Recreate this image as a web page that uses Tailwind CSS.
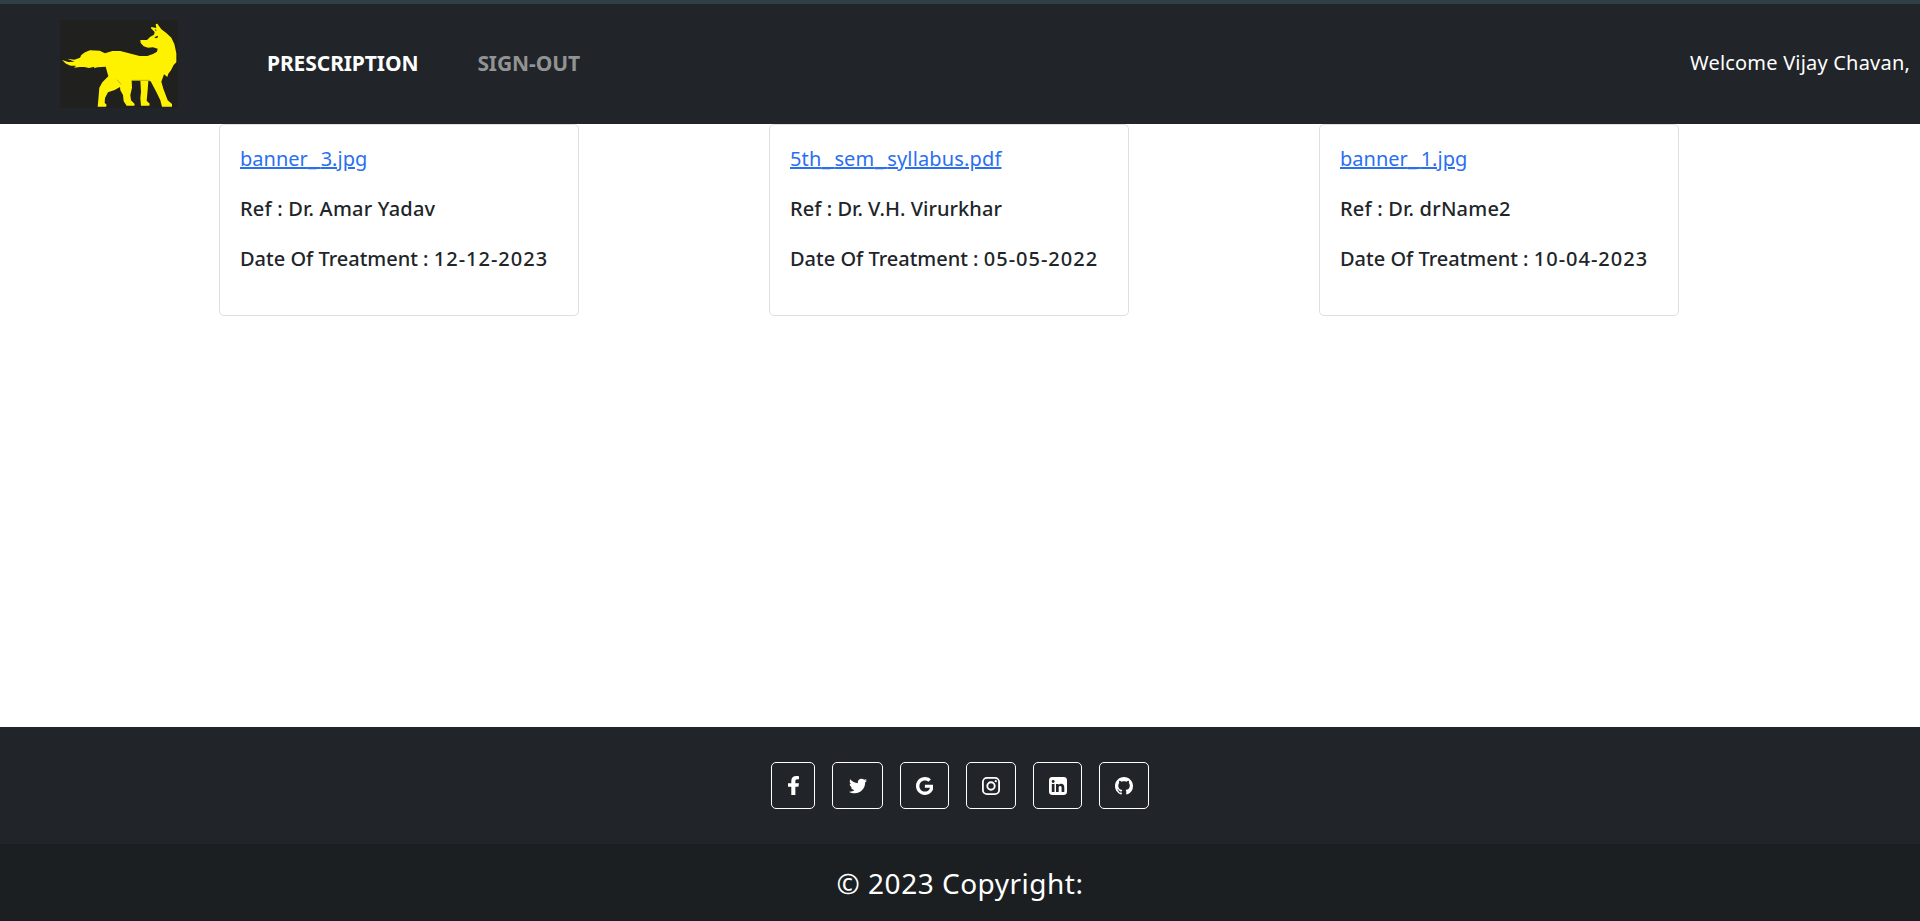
<!DOCTYPE html>
<html lang="en">
<head>
<meta charset="utf-8">
<title>Prescription</title>
<script src="https://cdn.jsdelivr.net/npm/@tailwindcss/browser@4"></script>
</head>
<body class="flex h-screen flex-col overflow-hidden bg-white font-['Noto_Sans',sans-serif] text-[20px] leading-[30px] text-[#212529]">
  <header class="h-[124px] shrink-0 border-t-4 border-[#2e3f47] bg-[#212529]">
    <nav class="flex h-full items-center pr-[10px] pb-[3px] pl-[60px] whitespace-nowrap">
      <svg class="mt-[2px] h-[88px] w-[118px]" viewBox="61 60 354 264" aria-label="Logo">
        <rect x="61" y="60" width="354" height="264" fill="#20201e"/>
        <path fill="#fff200" d="M67 180 L86 186 L105 185 L83 176 L104 179 L121 173 L125 165 L136 157 L151 151 L180 152 L196 160 L218 153 L242 153 L268 160 L300 168 L323 168 L340 162 L352 155 L354 146 L340 142 L325 143 L312 139 L303 129 L302 120 L322 120 L332 110 L343 104 L345 96 L334 85 L335 81 L350 84 L348 72 L353 71 L365 88 L379 98 L395 113 L404 132 L410 160 L410 187 L402 195 L394 211 L386 221 L383 231 L373 223 L365 245 L371 266 L384 301 L397 312 L397 320 L367 320 L362 301 L350 276 L333 244 L326 243 L324 271 L321 302 L330 311 L329 317 L304 317 L302 294 L304 275 L302 242 L276 242 L277 263 L272 285 L274 301 L285 312 L284 317 L261 317 L252 304 L250 285 L242 271 L241 261 L225 270 L205 277 L196 294 L195 308 L201 315 L199 320 L174 320 L176 299 L179 263 L188 247 L206 229 L201 211 L198 200 L173 202 L163 205 L164 200 L148 204 L134 201 L120 201 L103 203 L109 197 L93 197 L79 191Z"/>
        <path fill="#20201e" d="M344 112 l10 -5 l1 5 l-6 3z M349 87 l1 7 l-4 -4z"/>
        <path fill="none" stroke="#847e10" stroke-width="1.6" d="M276 241H331M232 239l12 14"/>
      </svg>
      <a class="ml-[89px] text-[21px] font-bold tracking-[-0.1px] text-white">PRESCRIPTION</a>
      <a class="ml-[59px] text-[21px] font-bold tracking-[-0.1px] text-[#919395]">SIGN-OUT</a>
      <span class="ml-auto tracking-[0.2px] text-white">Welcome Vijay Chavan,</span>
    </nav>
  </header>

  <main class="flex flex-1 items-start gap-[190px] pl-[219px] whitespace-nowrap">
    <article class="flex h-[192px] w-[360px] shrink-0 flex-col items-start gap-5 rounded-[5px] border border-[#dfdfdf] px-5 pt-[19px]">
      <a class="text-[#2a6ff0] underline">banner<span class="tracking-[4px]">_</span>3.jpg</a>
      <p class="font-medium tracking-[0.2px]">Ref : Dr. Amar Yadav</p>
      <p class="font-medium">Date Of Treatment : <span class="tracking-[1px]">12-12-2023</span></p>
    </article>
    <article class="flex h-[192px] w-[360px] shrink-0 flex-col items-start gap-5 rounded-[5px] border border-[#dfdfdf] px-5 pt-[19px]">
      <a class="tracking-[0.15px] text-[#2a6ff0] underline">5th<span class="tracking-[4px]">_</span>sem<span class="tracking-[4px]">_</span>syllabus.pdf</a>
      <p class="font-medium tracking-[0.05px]">Ref : Dr. V.H. Virurkhar</p>
      <p class="font-medium">Date Of Treatment : <span class="tracking-[1px]">05-05-2022</span></p>
    </article>
    <article class="flex h-[192px] w-[360px] shrink-0 flex-col items-start gap-5 rounded-[5px] border border-[#dfdfdf] px-5 pt-[19px]">
      <a class="text-[#2a6ff0] underline">banner<span class="tracking-[4px]">_</span>1.jpg</a>
      <p class="font-medium tracking-[0.2px]">Ref : Dr. drName2</p>
      <p class="font-medium">Date Of Treatment : <span class="tracking-[1px]">10-04-2023</span></p>
    </article>
  </main>

  <footer class="shrink-0 bg-[#212529] text-white">
    <div class="flex h-[117px] items-center justify-center gap-[17px]">
      <a class="flex h-[47px] w-[44px] items-center justify-center rounded-[5px] border border-white">
        <svg class="h-[19px] w-[11px]" viewBox="23 0 271 512" preserveAspectRatio="none" fill="currentColor"><path d="M279.14 288l14.22-92.66h-88.91v-60.13c0-25.35 12.42-50.06 52.24-50.06h40.42V6.26S260.43 0 225.36 0c-73.22 0-121.08 44.38-121.08 124.72v70.62H22.89V288h81.39v224h100.17V288z"/></svg>
      </a>
      <a class="flex h-[47px] w-[51px] items-center justify-center rounded-[5px] border border-white">
        <svg class="h-[18px] w-[18px]" viewBox="0 0 512 512" fill="currentColor"><path d="M459.37 151.716c.325 4.548.325 9.097.325 13.645 0 138.72-105.583 298.558-298.558 298.558-59.452 0-114.68-17.219-161.137-47.106 8.447.974 16.568 1.299 25.34 1.299 49.055 0 94.213-16.568 130.274-44.832-46.132-.975-84.792-31.188-98.112-72.772 6.498.974 12.995 1.624 19.818 1.624 9.421 0 18.843-1.3 27.614-3.573-48.081-9.747-84.143-51.98-84.143-102.985v-1.299c13.969 7.797 30.214 12.67 47.431 13.319-28.264-18.843-46.781-51.005-46.781-87.391 0-19.492 5.197-37.36 14.294-52.954 51.655 63.675 129.3 105.258 216.365 109.807-1.624-7.797-2.599-15.918-2.599-24.04 0-57.828 46.782-104.934 104.934-104.934 30.213 0 57.502 12.67 76.67 33.137 23.715-4.548 46.456-13.32 66.599-25.34-7.798 24.366-24.366 44.833-46.132 57.827 21.117-2.273 41.584-8.122 60.426-16.243-14.292 20.791-32.161 39.308-52.628 54.253z"/></svg>
      </a>
      <a class="flex h-[47px] w-[49px] items-center justify-center rounded-[5px] border border-white">
        <svg class="h-[18px] w-[17.5px]" viewBox="0 8 488 496" fill="currentColor"><path d="M488 261.8C488 403.3 391.1 504 248 504 110.8 504 0 393.2 0 256S110.8 8 248 8c66.8 0 123 24.5 166.3 64.9l-67.5 64.9C258.5 52.6 94.3 116.6 94.3 256c0 86.5 69.1 156.6 153.7 156.6 98.2 0 135-70.4 140.8-106.9H248v-85.3h236.1c2.3 12.7 3.9 24.9 3.9 41.4z"/></svg>
      </a>
      <a class="flex h-[47px] w-[50px] items-center justify-center rounded-[5px] border border-white">
        <svg class="h-[18px] w-[18px]" viewBox="0 0 18 18" fill="none" stroke="currentColor"><rect x="0.9" y="0.9" width="16.2" height="16.2" rx="4.2" stroke-width="1.8"/><circle cx="9" cy="9" r="3.7" stroke-width="1.9"/><circle cx="13.8" cy="4.2" r="1.1" fill="currentColor" stroke="none"/></svg>
      </a>
      <a class="flex h-[47px] w-[49px] items-center justify-center rounded-[5px] border border-white">
        <svg class="h-[18px] w-[18px]" viewBox="0 0 18 18"><rect width="18" height="18" rx="3.4" fill="currentColor"/><g fill="#212529"><circle cx="4.15" cy="4.5" r="1.45"/><path d="M2.8 7H5.5V15.1H2.8zM7 7H9.7V8.2C10.3 7.3 11.1 6.8 12.2 6.8C14.2 6.8 15.3 8.1 15.3 10.4V15.1H12.6V10.8C12.6 9.7 12.2 9 11.3 9C10.3 9 9.7 9.7 9.7 10.7V15.1H7z"/></g></svg>
      </a>
      <a class="flex h-[47px] w-[50px] items-center justify-center rounded-[5px] border border-white">
        <svg class="h-[18px] w-[18px]" viewBox="0 0 16 16" fill="currentColor"><path d="M8 0C3.58 0 0 3.58 0 8c0 3.54 2.29 6.53 5.47 7.59.4.07.55-.17.55-.38 0-.19-.01-.82-.01-1.49-2.01.37-2.53-.49-2.69-.94-.09-.23-.48-.94-.82-1.13-.28-.15-.68-.52-.01-.53.63-.01 1.08.58 1.23.82.72 1.21 1.87.87 2.33.66.07-.52.28-.87.51-1.07-1.78-.2-3.64-.89-3.64-3.95 0-.87.31-1.59.82-2.15-.08-.2-.36-1.02.08-2.12 0 0 .67-.21 2.2.82.64-.18 1.32-.27 2-.27s1.36.09 2 .27c1.53-1.04 2.2-.82 2.2-.82.44 1.1.16 1.92.08 2.12.51.56.82 1.27.82 2.15 0 3.07-1.87 3.75-3.65 3.95.29.25.54.73.54 1.48 0 1.07-.01 1.93-.01 2.2 0 .21.15.46.55.38A8.01 8.01 0 0 0 16 8c0-4.42-3.58-8-8-8"/></svg>
      </a>
    </div>
    <div class="flex h-[77px] items-center justify-center border-b border-[#1b1c23] bg-[#1b1f22] pt-[2px] text-[28px] tracking-[0.5px]">© 2023 Copyright:</div>
  </footer>
</body>
</html>
